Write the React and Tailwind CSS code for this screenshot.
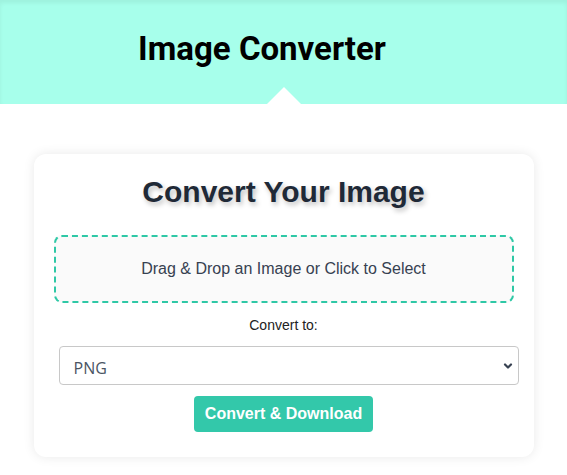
import React, { useState } from "react";

export default function App() {
  const [format, setFormat] = useState("png");

  return (
    <div className="min-h-screen bg-white font-['Liberation_Sans',Arial,sans-serif]">
      {/* Header with notch */}
      <header className="relative h-[104px] bg-[#a7ffeb] flex items-center justify-center shadow-[inset_0_3px_4px_rgba(0,0,0,0.06)]">
        <h1 className="font-['Roboto',sans-serif] font-bold text-[33px] text-black -mt-[6px] mr-[43px]">
          Image Converter
        </h1>
        <span className="absolute bottom-0 left-1/2 -translate-x-1/2 w-0 h-0 border-l-[17px] border-r-[17px] border-b-[17px] border-l-transparent border-r-transparent border-b-white" />
      </header>

      {/* Converter card */}
      <main className="pt-[50px] px-4">
        <div className="max-w-[500px] mx-auto bg-white rounded-xl shadow-[0_0_12px_rgba(0,0,0,0.09)] px-[20px] pt-[20px] pb-[25px] flex flex-col items-center">
          <h2 className="text-[30px] leading-[36px] font-bold text-[#1f2937] [text-shadow:2px_3px_5px_rgba(0,0,0,0.25)]">
            Convert Your Image
          </h2>

          <div className="mt-[25px] w-full h-[68px] rounded-lg border-2 border-dashed border-[#2ec8a6] bg-[#fafafa] flex items-center justify-center cursor-pointer">
            <p className="text-base text-[#374151]">Drag &amp; Drop an Image or Click to Select</p>
          </div>

          <label className="mt-[12px] text-sm leading-5 text-[#222]">Convert to:</label>

          <div className="relative mt-[11px] w-full ml-[10px]">
            <select
              value={format}
              onChange={(e) => setFormat(e.target.value)}
              className="w-full h-[39px] appearance-none rounded border border-[#c8c8c8] bg-white pl-[14px] pr-8 pt-[5px] font-['Open_Sans',sans-serif] text-[16px] text-[#4b5563] outline-none"
            >
              <option value="png">PNG</option>
              <option value="jpeg">JPEG</option>
              <option value="webp">WEBP</option>
            </select>
            <svg
              className="pointer-events-none absolute right-[6px] top-1/2 -translate-y-1/2 w-[10px] h-[10px] text-[#374151]"
              viewBox="0 0 10 10"
              fill="none"
              stroke="currentColor"
              strokeWidth="2.2"
              strokeLinecap="round"
              strokeLinejoin="round"
            >
              <path d="M2 3.5 5 6.5 8 3.5" />
            </svg>
          </div>

          <button className="mt-[11px] h-9 px-[11px] rounded bg-[#33c8aa] text-white font-bold text-base hover:bg-[#2bb89b]">
            Convert &amp; Download
          </button>
        </div>
      </main>
    </div>
  );
}
